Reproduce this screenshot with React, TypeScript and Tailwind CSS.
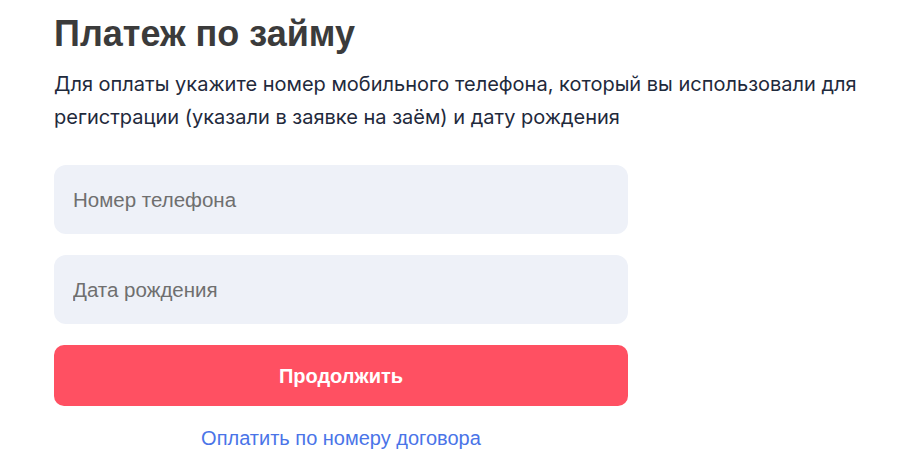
export default function App() {
  return (
    <div className="min-h-[471px] bg-white pl-[54px] pt-[13px]">
      <h1 className="font-['Liberation_Sans',Arial,sans-serif] text-[36px] font-bold leading-[42px] text-[#3b3b3b]">
        Платеж по займу
      </h1>
      <p className="mt-[13px] w-[830px] font-['Inter',sans-serif] text-[20px] leading-[33px] text-[#1f2a3c]">
        Для оплаты укажите номер мобильного телефона, который вы использовали для регистрации (указали в заявке на заём) и дату рождения
      </p>
      <form className="mt-[31px] flex w-[574px] flex-col" onSubmit={(e) => e.preventDefault()}>
        <input
          className="h-[69px] rounded-[12px] bg-[#eef1f8] px-[19px] font-['Liberation_Sans',Arial,sans-serif] text-[20.5px] text-[#333] outline-none placeholder:text-[#6f6f6f]"
          placeholder="Номер телефона"
        />
        <input
          className="mt-[21px] h-[69px] rounded-[12px] bg-[#eef1f8] px-[19px] font-['Liberation_Sans',Arial,sans-serif] text-[20.5px] text-[#333] outline-none placeholder:text-[#6f6f6f]"
          placeholder="Дата рождения"
        />
        <button
          type="submit"
          className="mt-[21px] h-[61px] rounded-[10px] bg-[#ff5062] font-['Liberation_Sans',Arial,sans-serif] text-[20px] font-bold text-white"
        >
          Продолжить
        </button>
        <a href="#" className="mt-[20px] self-center font-['Liberation_Sans',Arial,sans-serif] text-[20px] leading-[24px] text-[#4a74e8]">
          Оплатить по номеру договора
        </a>
      </form>
    </div>
  );
}
